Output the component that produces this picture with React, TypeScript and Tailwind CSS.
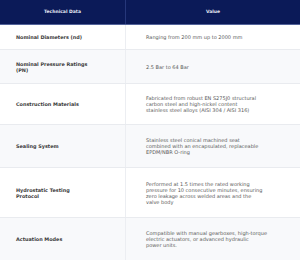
import React from "react";

type Spec = { label: string[]; value: string[]; h: string; stripe?: boolean };

// lines are split as in the original layout
const SPECS: Spec[] = [
  { label: ["Nominal Diameters (nd)"], value: ["Ranging from 200 mm up to 2000 mm"], h: "h-[25px]" },
  { label: ["Nominal Pressure Ratings", "(PN)"], value: ["2.5 Bar to 64 Bar"], h: "h-[34px]", stripe: true },
  {
    label: ["Construction Materials"],
    value: [
      "Fabricated from robust EN S275J0 structural",
      "carbon steel and high-nickel content",
      "stainless steel alloys (AISI 304 / AISI 316)",
    ],
    h: "h-[41px]",
  },
  {
    label: ["Sealing System"],
    value: ["Stainless steel conical machined seat", "combined with an encapsulated, replaceable", "EPDM/NBR O-ring"],
    h: "h-[43px]",
    stripe: true,
  },
  {
    label: ["Hydrostatic Testing", "Protocol"],
    value: [
      "Performed at 1.5 times the rated working",
      "pressure for 10 consecutive minutes, ensuring",
      "zero leakage across welded areas and the",
      "valve body",
    ],
    h: "h-[50px]",
  },
  {
    label: ["Actuation Modes"],
    value: ["Compatible with manual gearboxes, high-torque", "electric actuators, or advanced hydraulic", "power units."],
    h: "h-[43px]",
    stripe: true,
  },
];

export default function App() {
  return (
    <div className="w-[300px] h-[260px] overflow-hidden bg-white font-['DejaVu_Sans',sans-serif]">
      {/* header */}
      <div className="grid grid-cols-[126px_1fr] h-[25px] bg-[#0b1a58] border-b border-[#53639a]">
        <div className="flex items-center justify-center border-r border-[#26377a] text-[4.5px] font-bold text-[#e6e9f3]">
          Technical Data
        </div>
        <div className="flex items-center justify-center text-[4.5px] font-bold text-[#e6e9f3]">Value</div>
      </div>

      {SPECS.map((s) => (
        <div
          key={s.label[0]}
          className={`grid grid-cols-[126px_1fr] ${s.h} border-b border-[#e9ebef] ${s.stripe ? "bg-[#f8f9fb]" : "bg-white"}`}
        >
          <div className="flex flex-col justify-center pl-4 border-r border-[#eceef2] text-[4.9px] leading-[6px] font-bold text-[#3a3a3a]">
            {s.label.map((l) => (
              <div key={l} className="whitespace-nowrap">{l}</div>
            ))}
          </div>
          <div className="flex flex-col justify-center pl-5 text-[5px] leading-[6px] text-[#5a5a5a]">
            {s.value.map((l) => (
              <div key={l} className="whitespace-nowrap">{l}</div>
            ))}
          </div>
        </div>
      ))}
    </div>
  );
}
